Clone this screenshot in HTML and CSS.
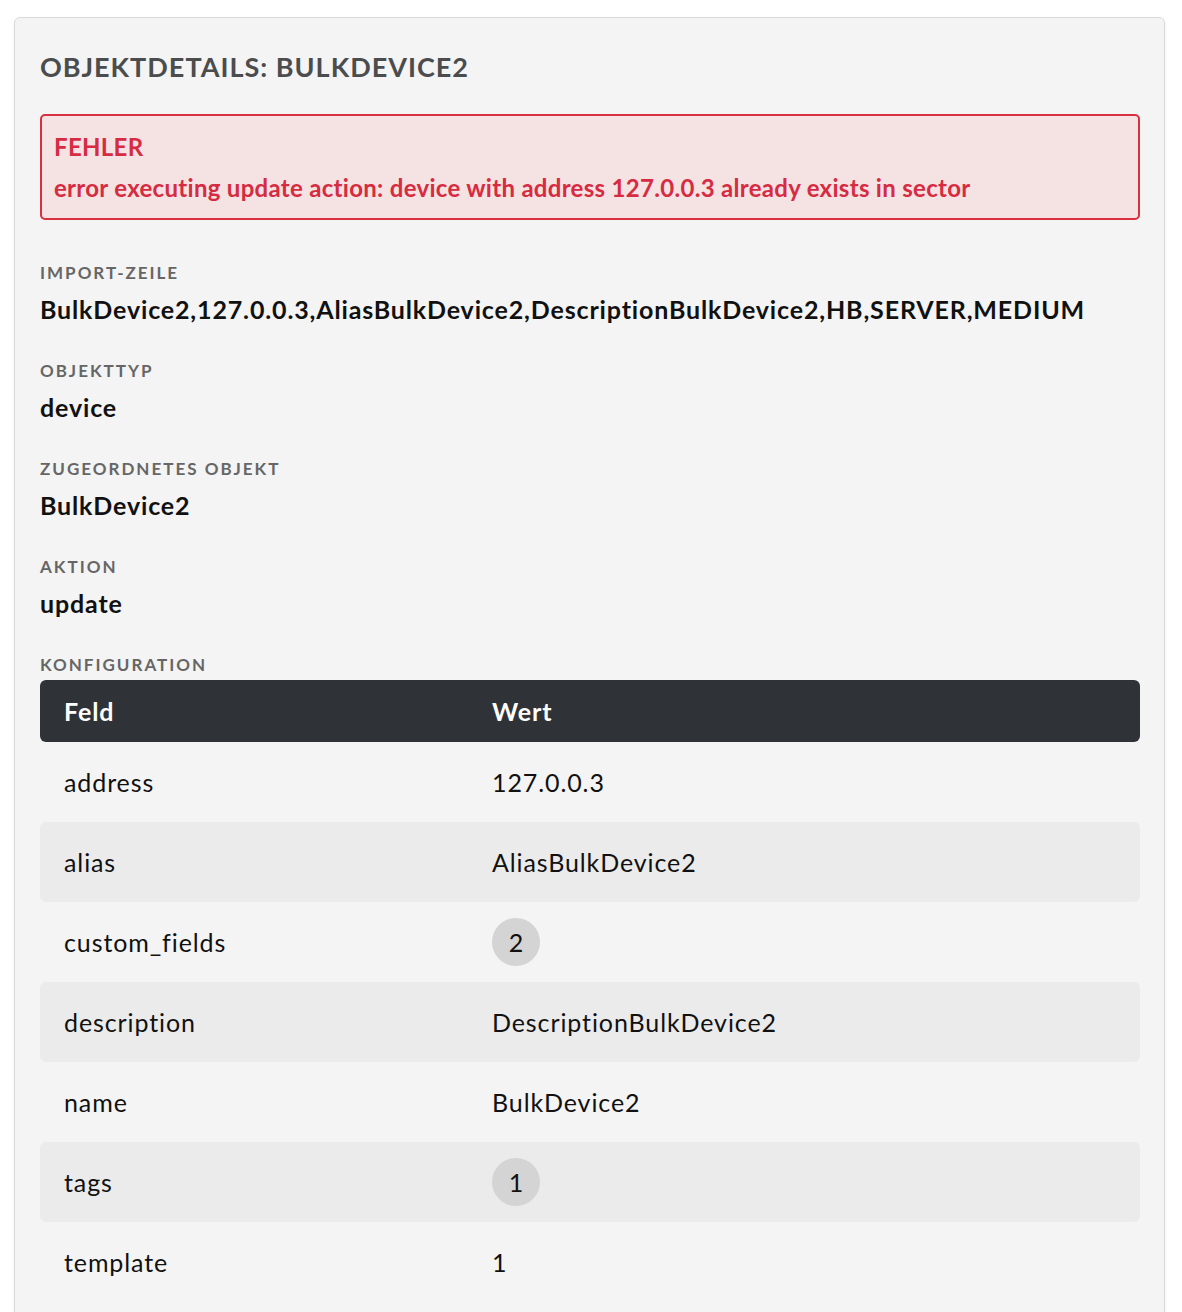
FILE: index.html
```html
<!DOCTYPE html>
<html lang="de">
<head>
<meta charset="utf-8">
<title>Objektdetails</title>
<link rel="stylesheet" href="styles.css">
</head>
<body>
<div class="card">
  <h2 class="title">Objektdetails: BulkDevice2</h2>
  <div class="alert">
    <div class="alert-title">FEHLER</div>
    <div class="alert-msg">error executing update action: device with address 127.0.0.3 already exists in sector</div>
  </div>
  <div class="field">
    <div class="label">Import-Zeile</div>
    <div class="value">BulkDevice2,127.0.0.3,AliasBulkDevice2,DescriptionBulkDevice2,HB,SERVER,MEDIUM</div>
  </div>
  <div class="field">
    <div class="label">Objekttyp</div>
    <div class="value">device</div>
  </div>
  <div class="field">
    <div class="label">Zugeordnetes Objekt</div>
    <div class="value">BulkDevice2</div>
  </div>
  <div class="field">
    <div class="label">Aktion</div>
    <div class="value">update</div>
  </div>
  <div class="label">Konfiguration</div>
  <table class="config">
    <thead>
      <tr><th class="col-key">Feld</th><th>Wert</th></tr>
    </thead>
    <tbody>
      <tr><td>address</td><td>127.0.0.3</td></tr>
      <tr><td>alias</td><td>AliasBulkDevice2</td></tr>
      <tr><td>custom_fields</td><td><span class="badge">2</span></td></tr>
      <tr><td>description</td><td>DescriptionBulkDevice2</td></tr>
      <tr><td>name</td><td>BulkDevice2</td></tr>
      <tr><td>tags</td><td><span class="badge">1</span></td></tr>
      <tr><td>template</td><td>1</td></tr>
    </tbody>
  </table>
</div>
</body>
</html>
```
FILE: styles.css
```css
html, body {
  margin: 0;
  background: #ffffff;
}
body {
  padding: 17px 17px 0 14px;
  font-family: Lato, "Noto Sans", sans-serif;
  color: #111;
  font-variant-ligatures: none;
}
.card {
  background: #f4f4f4;
  border: 1px solid #dadada;
  border-radius: 6px;
  box-shadow: 0 1px 3px rgba(0,0,0,0.08);
  padding: 30px 24px 40px 25px;
  min-height: 1300px;
}
.title {
  margin: 0 0 28px 0;
  font-size: 27px;
  font-weight: 700;
  letter-spacing: 1px;
  text-transform: uppercase;
  color: #4a4c4e;
  line-height: 38px;
}
.alert {
  background: #f5e2e3;
  border: 2px solid #d7303f;
  border-radius: 5px;
  padding: 13px 12px 10px 12px;
  color: #d62b40;
  font-weight: 700;
  font-size: 24px;
  letter-spacing: 0.3px;
  margin-bottom: 41px;
}
.alert-title {
  line-height: 35px;
  margin-bottom: 4px;
}
.alert-msg {
  line-height: 40px;
}
.field {
  margin-bottom: 27px;
}
.label {
  font-size: 17px;
  font-weight: 700;
  letter-spacing: 2px;
  text-transform: uppercase;
  color: #666;
  line-height: 24px;
}
.value {
  margin-top: 1px;
  font-size: 25px;
  font-weight: 700;
  letter-spacing: 0.85px;
  color: #111;
  line-height: 46px;
}
.config {
  width: 100%;
  border-collapse: separate;
  border-spacing: 0;
  font-size: 25px;
  letter-spacing: 0.9px;
  margin-top: 3px;
}
.config th {
  background: #2f3337;
  color: #fff;
  text-align: left;
  font-weight: 700;
  height: 62px;
  padding: 0 24px;
}
.config th:first-child { border-radius: 6px 0 0 6px; }
.config th:last-child { border-radius: 0 6px 6px 0; }
.col-key { width: 380px; }
.config td {
  height: 80px;
  padding: 0 24px;
  color: #111;
}
.config tbody tr:nth-child(even) td { background: #ebebeb; }
.config tbody tr:nth-child(even) td:first-child { border-radius: 6px 0 0 6px; }
.config tbody tr:nth-child(even) td:last-child { border-radius: 0 6px 6px 0; }
.badge {
  display: inline-flex;
  align-items: center;
  justify-content: center;
  width: 48px;
  height: 48px;
  border-radius: 50%;
  background: #d4d4d4;
  letter-spacing: 0;
  vertical-align: middle;
}
```
